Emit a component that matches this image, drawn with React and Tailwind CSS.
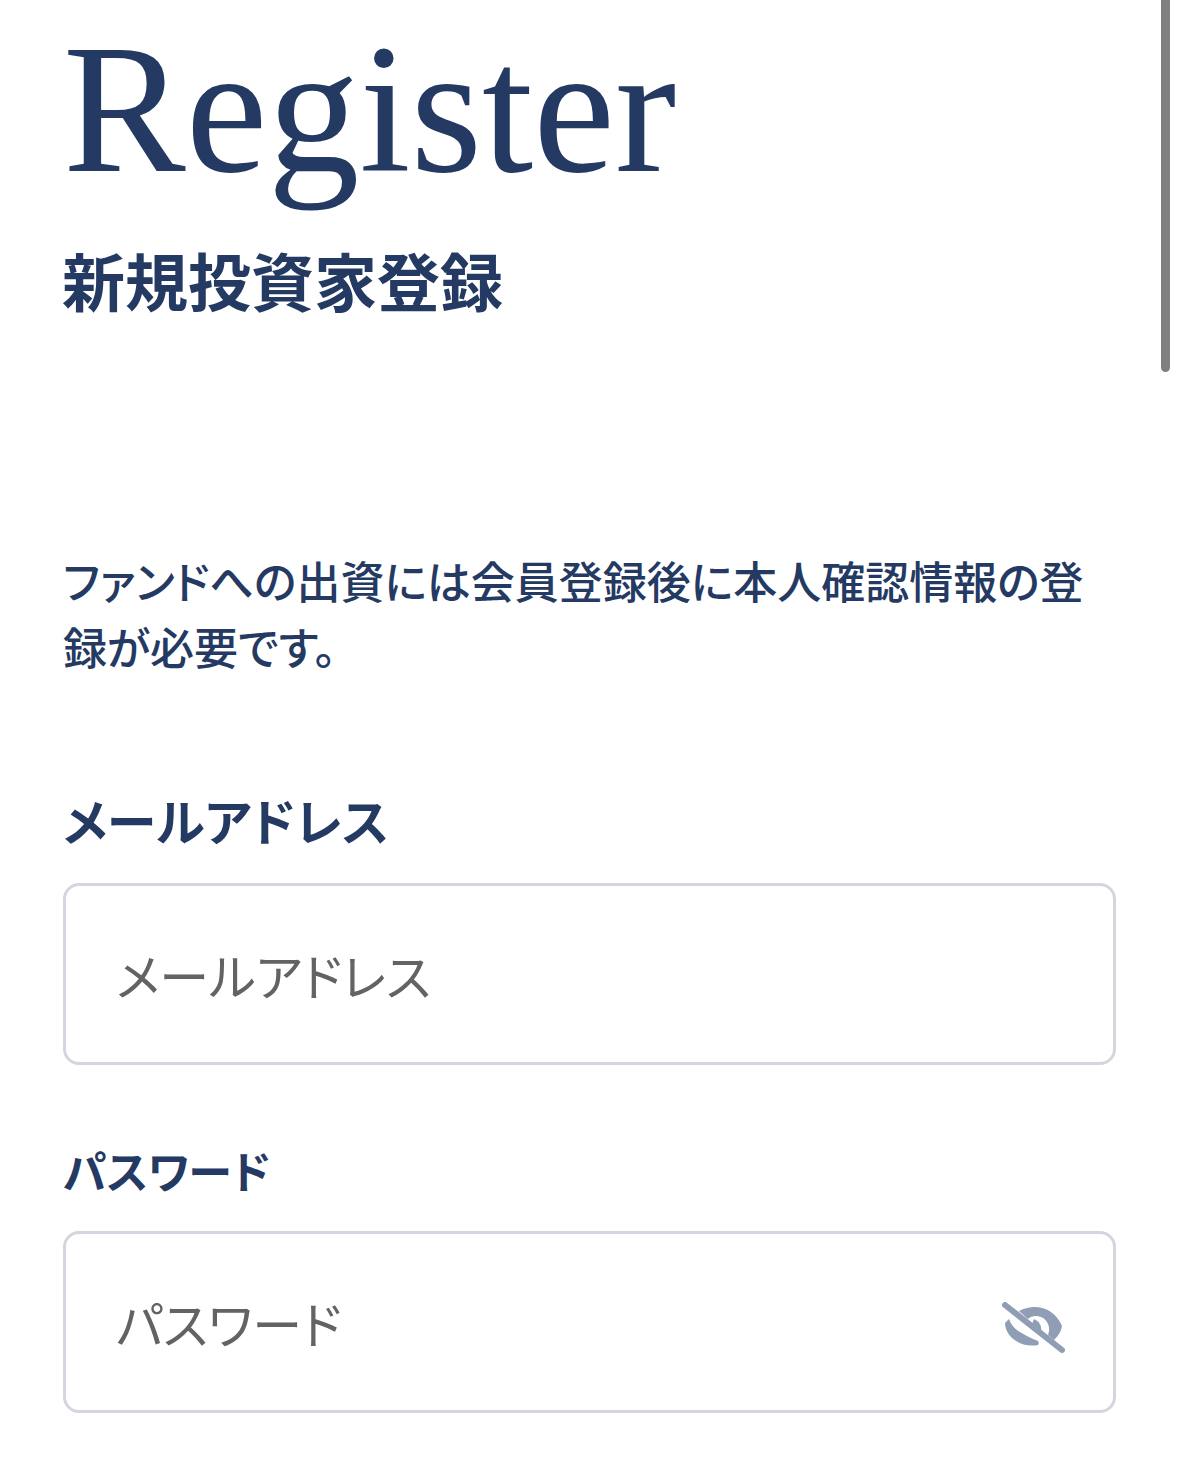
const JP = '"Noto Sans CJK JP", "Noto Sans", sans-serif'

function EyeOff() {
  return (
    <svg viewBox="0 0 64 52" className="w-[64px] h-[52px] shrink-0 mt-[12px]" aria-hidden="true">
      <path fill="#8f9db5" d="M18 9 C24 6 29 5 33 5 C46 5 56 12 61 24 C60 30 57 34 53 38 L47 33 C50 26 47 18 40 15 C35 13 30 14 27 17 Z" />
      <path fill="#8f9db5" d="M4 21 L8 17 C10 23 14 27 19 30 C24 33 29 36 37 39 C38 41 38 42 37 43 C27 45 18 42 11 36 C7 32 4 27 4 21 Z" />
      <path fill="#8f9db5" d="M33 17 C38 19 41 24 40 29 L31 22 Z" />
      <path stroke="#8f9db5" strokeWidth="6" strokeLinecap="round" d="M4 3 L61 48" />
    </svg>
  )
}

function Field({ label, labelClass, gapClass, placeholder, icon }) {
  return (
    <div className="flex flex-col">
      <label className={`font-bold text-[#243a63] ${labelClass}`}>{label}</label>
      <div className={`h-[182px] rounded-[16px] border-[3px] border-[#d3d6de] bg-white flex items-center justify-between pl-[50px] pr-[48px] ${gapClass}`}>
        <span className="text-[50px] leading-none text-[#636363]">{placeholder}</span>
        {icon}
      </div>
    </div>
  )
}

export default function App() {
  return (
    <div className="relative w-[1179px] h-[1464px] overflow-hidden bg-white [font-feature-settings:'palt']" style={{ fontFamily: JP }}>
      {/* scrollbar */}
      <div className="absolute top-0 right-[9px] w-[9px] h-[372px] rounded-b-full bg-[#808080]" />

      <div className="pl-[63px] pr-[63px]">
        <h1 className="pt-[9px] h-[232px] text-[#243a63] text-[184px] leading-[200px] font-['Liberation_Serif',serif]">
          Register
        </h1>
        <h2 className="text-[63px] leading-[90px] font-bold text-[#243a63] mt-[2px] -ml-[1px]">新規投資家登録</h2>

        <p className="mt-[223px] text-[44px] leading-[66px] font-medium text-[#243a63]">
          ファンドへの出資には会員登録後に本人確認情報の登録が必要です。
        </p>

        <div className="mt-[107px] flex flex-col gap-[75px]">
          <Field label="メールアドレス" labelClass="text-[50px] leading-[66px]" gapClass="mt-[31px]" placeholder="メールアドレス" />
          <Field label="パスワード" labelClass="text-[44px] leading-[60px]" gapClass="mt-[31px]" placeholder="パスワード" icon={<EyeOff />} />
        </div>
      </div>
    </div>
  )
}
